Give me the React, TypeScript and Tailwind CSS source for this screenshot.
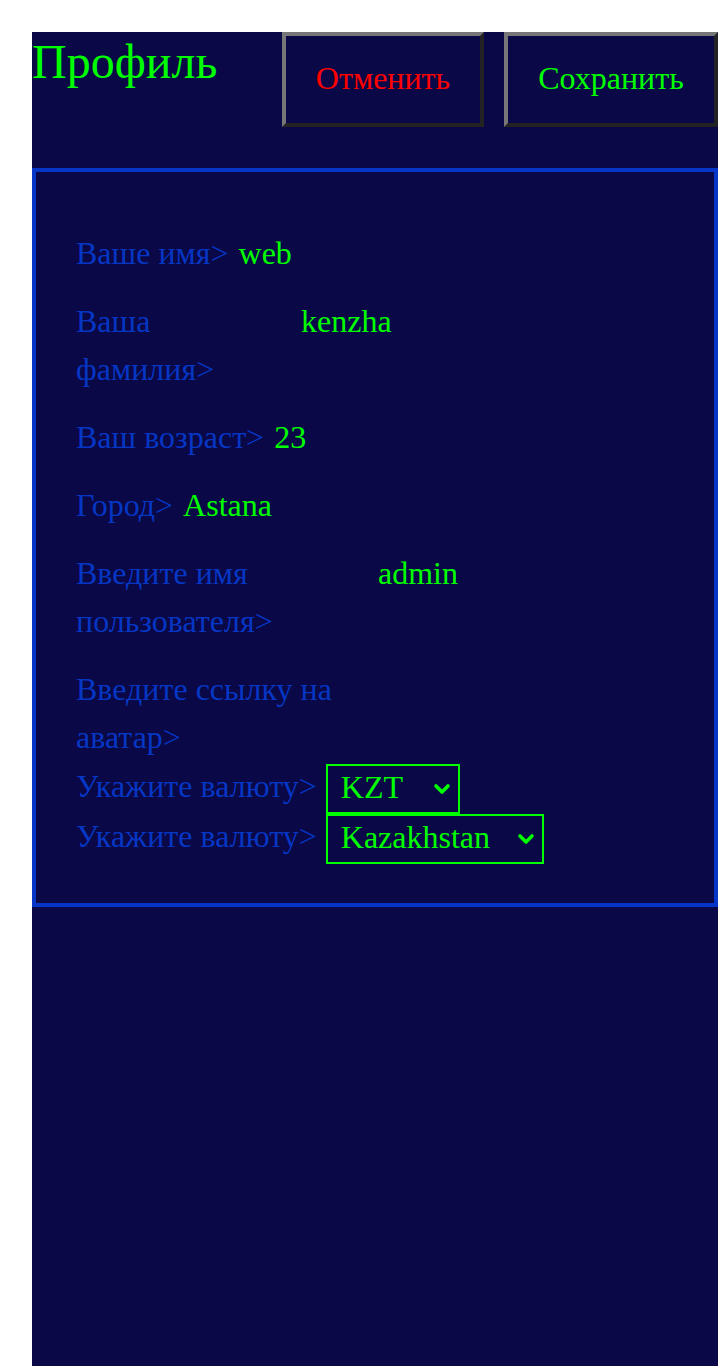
import React from "react";

interface FieldProps {
  label: string;
  value?: string;
  labelWidth?: string;
  last?: boolean;
}

const Field: React.FC<FieldProps> = ({ label, value, labelWidth, last }) => {
  return (
    <div
      className={
        last
          ? " flex flex-row items-baseline gap-[10px] mb-[3px]"
          : " flex flex-row items-baseline gap-[10px] mb-[20px]"
      }
    >
      <span className={" text-[#0636c4] shrink-0 " + (labelWidth ?? "")}>
        {label}
      </span>
      <span className=" text-[#00ff00]">{value}</span>
    </div>
  );
};

interface SelectProps {
  label: string;
  value: string;
  width: string;
}

const FakeSelect: React.FC<SelectProps> = ({ label, value, width }) => {
  return (
    <div className=" flex flex-row items-center gap-[9px] h-[50px]">
      <span className=" text-[#0636c4] mb-[6px]">{label}</span>
      <div
        className={
          " flex flex-row items-center justify-between h-[50px] border-2 border-[#00ff00] pl-[13px] pr-[7px] text-[#00ff00] " +
          width
        }
      >
        <span className=" mb-[4px]">{value}</span>
        <svg width="18" height="12" viewBox="0 0 18 12">
          <polyline
            points="3,3 9,9 15,3"
            fill="none"
            stroke="#00ff00"
            strokeWidth="3.6"
            strokeLinecap="round"
            strokeLinejoin="round"
          />
        </svg>
      </div>
    </div>
  );
};

const App: React.FC = () => {
  return (
    <div className=" bg-white min-h-[1366px] pl-[32px] pt-[32px] font-['Liberation_Serif','Times_New_Roman',serif]">
      <div className=" bg-[#0a0846] w-[686px] min-h-[1334px]">
        <div className=" flex flex-row justify-between items-start mb-[41px]">
          <h1 className=" text-[48px] leading-none mt-[6px] text-[#00ff00]">
            Профиль
          </h1>
          <div className=" flex flex-row gap-[20px]">
            <button className=" w-[202px] h-[95px] pb-[4px] border-4 border-t-[#777777] border-l-[#777777] border-b-[#232323] border-r-[#232323] text-[32px] leading-[48px] text-[#ff0000] bg-[#0a0846]">
              Отменить
            </button>
            <button className=" w-[214px] h-[95px] pb-[4px] border-4 border-t-[#777777] border-l-[#777777] border-b-[#232323] border-r-[#232323] text-[32px] leading-[48px] text-[#00ff00] bg-[#0a0846]">
              Сохранить
            </button>
          </div>
        </div>

        <div className=" border-4 border-[#0636c8] pt-[57px] pb-[39px] px-[40px] text-[32px] leading-[48px]">
          <Field label="Ваше имя>" value="web" />
          <Field label="Ваша фамилия>" value="kenzha" labelWidth="w-[215px]" />
          <Field label="Ваш возраст>" value="23" />
          <Field label="Город>" value="Astana" />
          <Field
            label="Введите имя пользователя>"
            value="admin"
            labelWidth="w-[292px]"
          />
          <Field
            label="Введите ссылку на аватар>"
            value=""
            labelWidth="w-[292px]"
            last
          />
          <FakeSelect label="Укажите валюту>" value="KZT" width="w-[134px]" />
          <FakeSelect
            label="Укажите валюту>"
            value="Kazakhstan"
            width="w-[218px]"
          />
        </div>
      </div>
    </div>
  );
};

export default App;
